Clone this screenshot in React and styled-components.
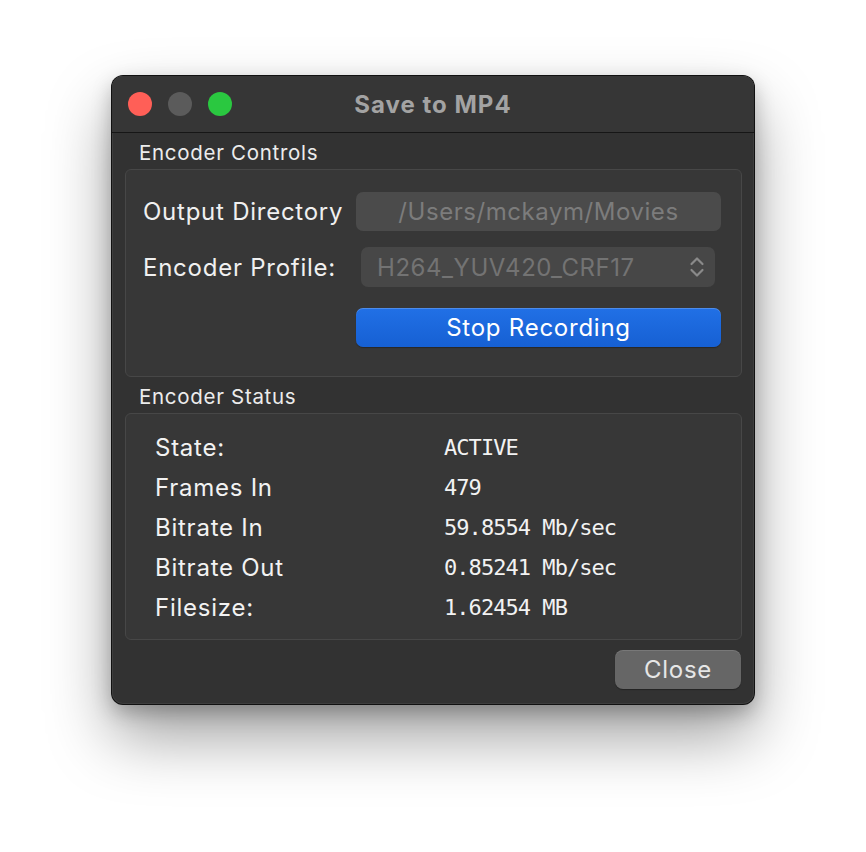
import React from "react";
import styled, { createGlobalStyle } from "styled-components";

const GlobalStyle = createGlobalStyle`
  html, body { margin: 0; padding: 0; background: #ffffff; }
  body { font-family: Inter, "Liberation Sans", Arial, sans-serif; }
  * { box-sizing: border-box; }
`;

const Page = styled.div`
  width: 866px;
  height: 852px;
  display: flex;
  justify-content: center;
  align-items: flex-start;
  padding-top: 76px;
`;

const Window = styled.div`
  width: 642px;
  height: 628px;
  border-radius: 11px;
  background: #323232;
  box-shadow:
    0 0 0 1px #111111,
    inset 0 1px 0 rgba(255, 255, 255, 0.18),
    inset 0 0 0 1px rgba(255, 255, 255, 0.06),
    0 32px 64px rgba(0, 0, 0, 0.38),
    0 8px 20px rgba(0, 0, 0, 0.25);
  display: flex;
  flex-direction: column;
  overflow: hidden;
  font-family: Inter, "Liberation Sans", Arial, sans-serif;
  letter-spacing: 0.75px;
`;

const TitleBar = styled.div`
  height: 57px;
  display: grid;
  grid-template-columns: 1fr auto 1fr;
  align-items: center;
  background: #363636;
  border-bottom: 1px solid #161616;
  padding: 0 16px;
`;

const Lights = styled.div`
  display: flex;
  gap: 16px;
`;

const Light = styled.span`
  width: 24px;
  height: 24px;
  border-radius: 50%;
  background: ${(p) => p.$color};
`;

const Title = styled.div`
  font-size: 24px;
  font-weight: 700;
  color: #a3a3a3;
  letter-spacing: 1px;
`;

const Body = styled.div`
  flex: 1;
  display: flex;
  flex-direction: column;
  padding: 8px 12px 0 13px;
`;

const GroupLabel = styled.div`
  height: 24px;
  line-height: 24px;
  font-size: 20.5px;
  letter-spacing: 0.7px;
  color: #ececec;
  padding-left: 14px;
  margin-top: ${(p) => p.$top || 0}px;
  margin-bottom: 4px;
`;

const GroupBox = styled.div`
  height: ${(p) => p.$h}px;
  background: #373737;
  border: 1px solid #474747;
  border-radius: 6px;
`;

const ControlsGrid = styled.div`
  display: grid;
  grid-template-columns: 213px 365px;
  padding: 22px 0 0 17px;
`;

const FieldLabel = styled.div`
  font-size: 24px;
  color: #f0f0f0;
  display: flex;
  align-items: center;
  margin-top: ${(p) => p.$top || 0}px;
`;

const TextField = styled.div`
  height: 39px;
  border-radius: 7px;
  background: #4b4b4b;
  color: #7c7c7c;
  font-size: 24px;
  letter-spacing: 0.55px;
  display: flex;
  align-items: center;
  justify-content: center;
`;

const Select = styled.div`
  height: 40px;
  margin: 16px 6px 0 5px;
  border-radius: 7px;
  background: #474747;
  color: #737373;
  font-size: 24px;
  letter-spacing: 0.55px;
  display: flex;
  align-items: center;
  justify-content: space-between;
  padding: 0 10px 0 16px;
`;

const PrimaryButton = styled.div`
  height: 39px;
  margin-top: 21px;
  border-radius: 7px;
  background: linear-gradient(#2170e6, #1660d3);
  box-shadow: inset 0 1px 0 rgba(255, 255, 255, 0.2), 0 1px 1px rgba(0, 0, 0, 0.3);
  color: #ffffff;
  font-size: 24px;
  display: flex;
  align-items: center;
  justify-content: center;
`;

const StatusGrid = styled.div`
  display: grid;
  grid-template-columns: 289px 1fr;
  grid-auto-rows: 40px;
  padding: 13px 0 0 29px;
`;

const StatusLabel = styled.div`
  font-size: 24px;
  color: #f2f2f2;
  display: flex;
  align-items: center;
`;

const StatusValue = styled.div`
  font-family: "DejaVu Sans Mono", "Liberation Mono", monospace;
  font-size: 22px;
  letter-spacing: -0.95px;
  color: #f2f2f2;
  display: flex;
  align-items: center;
`;

const Footer = styled.div`
  display: flex;
  justify-content: flex-end;
  padding: 10px 1px 0 0;
`;

const Button = styled.div`
  width: 126px;
  height: 39px;
  border-radius: 8px;
  background: #666666;
  box-shadow: inset 0 1px 0 rgba(255, 255, 255, 0.12), 0 1px 1px rgba(0, 0, 0, 0.3);
  color: #e6e6e6;
  font-size: 24px;
  display: flex;
  align-items: center;
  justify-content: center;
`;

const Chevrons = () => (
  <svg width="16" height="24" viewBox="0 0 16 24" fill="none">
    <path d="M2.5 9 L8 3.5 L13.5 9" stroke="#8a8a8a" strokeWidth="2.2" strokeLinecap="round" strokeLinejoin="round" />
    <path d="M2.5 15 L8 20.5 L13.5 15" stroke="#8a8a8a" strokeWidth="2.2" strokeLinecap="round" strokeLinejoin="round" />
  </svg>
);

const status = [
  ["State:", "ACTIVE"],
  ["Frames In", "479"],
  ["Bitrate In", "59.8554 Mb/sec"],
  ["Bitrate Out", "0.85241 Mb/sec"],
  ["Filesize:", "1.62454 MB"],
];

export default function App() {
  return (
    <>
      <GlobalStyle />
      <Page>
        <Window>
          <TitleBar>
            <Lights>
              <Light $color="#ff5f57" />
              <Light $color="#5b5b5b" />
              <Light $color="#2ac840" />
            </Lights>
            <Title>Save to MP4</Title>
            <span />
          </TitleBar>
          <Body>
            <GroupLabel>Encoder Controls</GroupLabel>
            <GroupBox $h={208}>
              <ControlsGrid>
                <FieldLabel>Output Directory</FieldLabel>
                <TextField>/Users/mckaym/Movies</TextField>
                <FieldLabel $top={16}>Encoder Profile:</FieldLabel>
                <Select>
                  <span>H264_YUV420_CRF17</span>
                  <Chevrons />
                </Select>
                <span />
                <PrimaryButton>Stop Recording</PrimaryButton>
              </ControlsGrid>
            </GroupBox>
            <GroupLabel $top={8}>Encoder Status</GroupLabel>
            <GroupBox $h={227}>
              <StatusGrid>
                {status.map(([k, v]) => (
                  <React.Fragment key={k}>
                    <StatusLabel>{k}</StatusLabel>
                    <StatusValue>{v}</StatusValue>
                  </React.Fragment>
                ))}
              </StatusGrid>
            </GroupBox>
            <Footer>
              <Button>Close</Button>
            </Footer>
          </Body>
        </Window>
      </Page>
    </>
  );
}
